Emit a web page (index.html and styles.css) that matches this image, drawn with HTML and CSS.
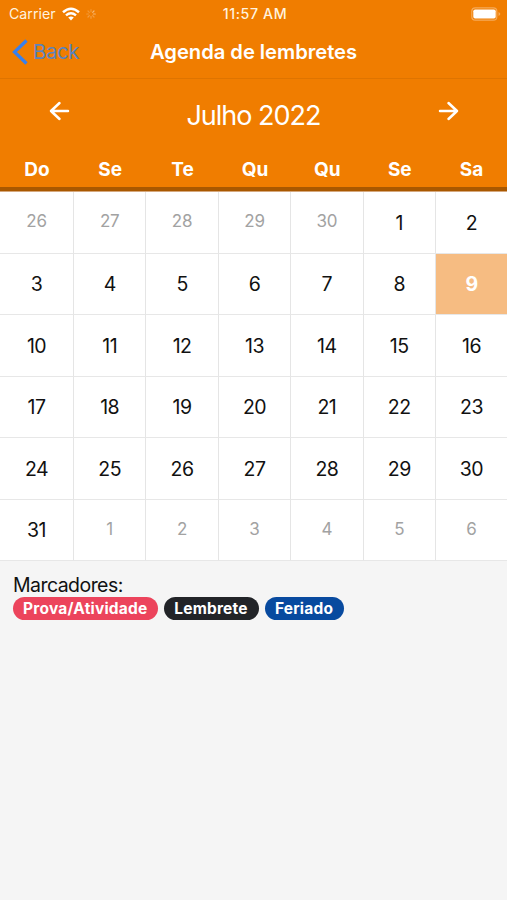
FILE: index.html
```html
<!DOCTYPE html>
<html lang="pt-BR">
<head>
<meta charset="utf-8">
<title>Agenda de lembretes</title>
<link rel="stylesheet" href="styles.css">
</head>
<body>
<div class="status">
  <div class="status-left"><span class="carrier">Carrier</span>
    <svg class="wifi" width="18" height="14" viewBox="0 0 18 14"><g fill="none" stroke="#fff" stroke-width="2.5"><path d="M1 5.2Q9-1.7 17 5.2"/><path d="M4 8.4Q9 4.2 14 8.4"/></g><path fill="#fff" d="M6.2 10.5Q9 8.5 11.8 10.5L9 13.5Z"/></svg>
    <svg class="spinner" width="10" height="10" viewBox="0 0 10 10" stroke="#fff" stroke-width="1.2" stroke-linecap="round"><path opacity=".2" d="M5 .7v2M2 2l1.3 1.3M.7 5h2"/><path opacity=".25" d="M2 8l1.3-1.3M5 9.3v-2M8 8L6.7 6.7"/><path opacity=".45" d="M9.3 5h-2M8 2L6.7 3.3"/></svg>
  </div>
  <span class="time">11:57 AM</span>
  <div class="status-right"><svg width="30" height="14" viewBox="0 0 30 14"><rect x=".8" y=".8" width="25" height="12.4" rx="3.5" fill="none" stroke="#fff" stroke-opacity=".35" stroke-width="1.2"/><rect x="2.3" y="2.5" width="22.4" height="9" rx="1.8" fill="#fff"/><path d="M27.5 5v4q1.8-.8 1.8-2t-1.8-2" fill="#fff" opacity=".35"/></svg></div>
</div>
<header class="nav">
  <a class="back"><svg width="16" height="26" viewBox="0 0 16 26"><path d="M14.5 1.5L2.5 13 14.5 24.5" fill="none" stroke="#3880ed" stroke-width="3.3"/></svg><span>Back</span></a>
  <h1>Agenda de lembretes</h1>
  <span></span>
</header>
<section class="month">
  <svg width="22" height="20" viewBox="0 0 22 20"><path d="M11.5 2L3 10l8.5 8M3 10h17" /></svg>
  <h2>Julho 2022</h2>
  <svg width="22" height="20" viewBox="0 0 22 20"><path d="M11.5 2l8.5 8-8.5 8M20 10H3" /></svg>
</section>
<div class="weekdays"><span>Do</span><span>Se</span><span>Te</span><span>Qu</span><span>Qu</span><span>Se</span><span>Sa</span></div>
<main class="days">
<span class="out">26</span><span class="out">27</span><span class="out">28</span><span class="out">29</span><span class="out">30</span><span>1</span><span>2</span>
<span>3</span><span>4</span><span>5</span><span>6</span><span>7</span><span>8</span><span class="today">9</span>
<span>10</span><span>11</span><span>12</span><span>13</span><span>14</span><span>15</span><span>16</span>
<span>17</span><span>18</span><span>19</span><span>20</span><span>21</span><span>22</span><span>23</span>
<span>24</span><span>25</span><span>26</span><span>27</span><span>28</span><span>29</span><span>30</span>
<span>31</span><span class="out">1</span><span class="out">2</span><span class="out">3</span><span class="out">4</span><span class="out">5</span><span class="out">6</span>
</main>
<section class="legend">
  <p>Marcadores:</p>
  <div class="badges"><span class="badge exam">Prova/Atividade</span><span class="badge note">Lembrete</span><span class="badge holiday">Feriado</span></div>
</section>
</body>
</html>
```
FILE: styles.css
```css
* { box-sizing: border-box; }
body {
  margin: 0;
  height: 900px;
  overflow: hidden;
  background: #f5f5f5;
  color: #111;
  font-family: Inter, "Liberation Sans", sans-serif;
}
h1, h2, p { margin: 0; }
svg { display: block; flex: none; }
.status, .nav, .month, .weekdays { background: #f07d00; color: #fff; }
.status {
  display: grid;
  grid-template-columns: 1fr auto 1fr;
  align-items: center;
  height: 27px;
  padding: 0 6px 0 9px;
}
.status-left { display: flex; align-items: center; }
.carrier { width: 53px; font-size: 14.2px; color: #fff2df; }
.spinner { margin-left: 6px; }
.time { font-size: 14.2px; font-weight: 500; letter-spacing: .6px; color: #fff2df; }
.status-right { display: flex; justify-content: flex-end; }
.nav {
  display: grid;
  grid-template-columns: 1fr auto 1fr;
  align-items: center;
  height: 52px;
  padding: 0 12px 1px;
  border-bottom: 1px solid #df7400;
}
.back { display: flex; align-items: center; gap: 5px; font-size: 20.5px; letter-spacing: -.5px; color: #5b83bd; }
.back span { margin-top: -1px; }
h1 { font-size: 20.2px; font-weight: 600; letter-spacing: -.03px; line-height: 26px; }
.month {
  display: flex;
  justify-content: space-between;
  height: 72px;
  padding: 22px 48px 0;
}
.month path { fill: none; stroke: #fff; stroke-width: 2.5; stroke-linecap: round; stroke-linejoin: round; }
h2 { font-size: 27px; font-weight: 400; letter-spacing: -1px; line-height: 30px; }
.weekdays, .days { display: grid; grid-template-columns: 74px repeat(5, 72.4px) 1fr; }
.weekdays {
  height: 40px;
  padding-top: 7px;
  border-bottom: 4px solid #a95800;
  text-align: center;
  font-size: 19px;
  font-weight: 700;
  line-height: 24px;
}
.days { height: 370px; border-top: 1px solid #d5a87d; grid-template-rows: repeat(6, 1fr); background: #fff; }
.days span {
  display: flex;
  align-items: center;
  justify-content: center;
  padding-top: 1px;
  border-right: 1px solid #e5e5e5;
  border-bottom: 1px solid #e7e7e7;
  font-size: 19.5px;
  letter-spacing: -.5px;
}
.days span:nth-child(7n) { border-right: 0; }
.days .out { padding: 0 0 2px; color: #a2a2a2; font-size: 17px; letter-spacing: -.2px; }
.days .today { background: #f6bc82; color: #fff; font-weight: 700; }
.legend { padding: 12px 13px; }
.legend p { font-size: 19.5px; letter-spacing: -.55px; line-height: 24px; }
.badges { display: flex; gap: 6px; }
.badge {
  display: flex;
  align-items: center;
  justify-content: center;
  height: 23px;
  border-radius: 12px;
  color: #fff;
  font-size: 15.5px;
  font-weight: 700;
  letter-spacing: .2px;
}
.exam { width: 144.5px; background: #ec445c; }
.note { width: 95px; background: #222428; }
.holiday { width: 79px; background: #084a9f; }
```
